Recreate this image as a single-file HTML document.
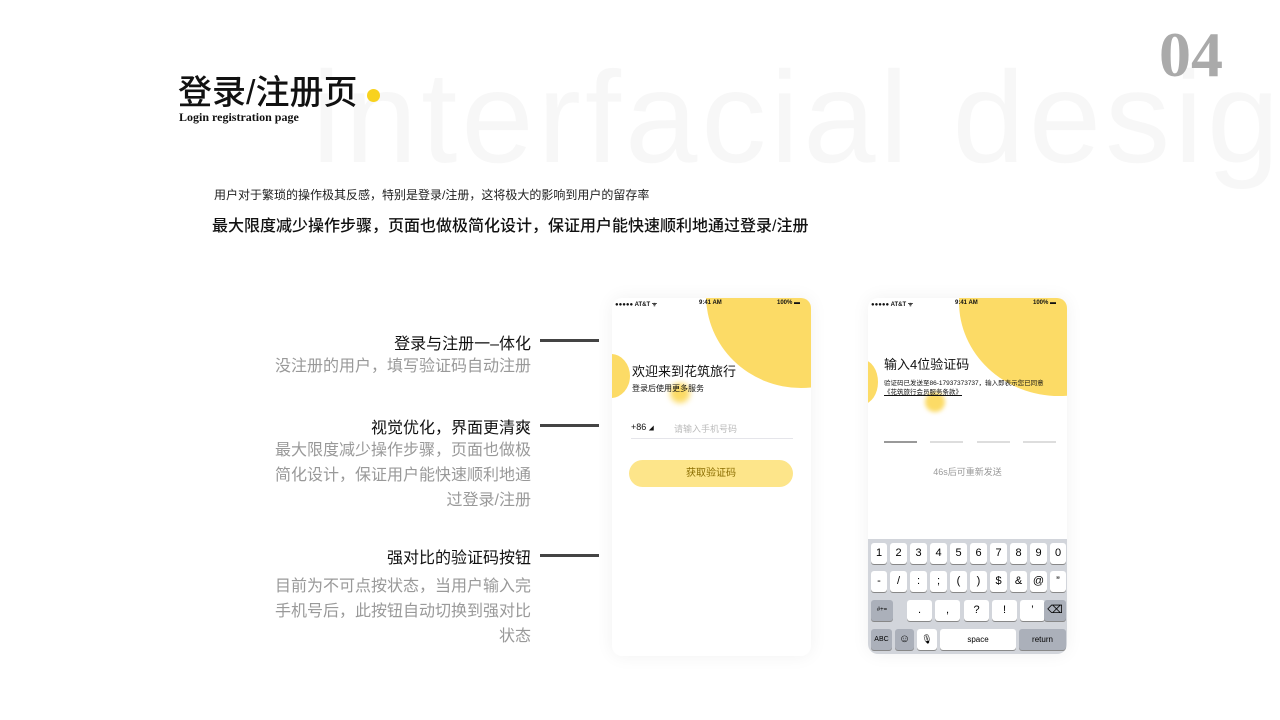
<!DOCTYPE html>
<html><head><meta charset="utf-8"><style>
*{margin:0;padding:0;box-sizing:border-box}
body{width:1280px;height:720px;background:#fff;position:relative;overflow:hidden;font-family:"Liberation Sans","Noto Sans CJK SC",sans-serif;color:#111}
.a{position:absolute}
.wm{left:312px;top:42px;font-size:130px;color:#f7f7f7;letter-spacing:4px;white-space:nowrap;font-family:"Liberation Sans",sans-serif}
.phone{position:absolute;background:#fff;border-radius:10px;overflow:hidden;box-shadow:0 0 18px rgba(0,0,0,.06)}
.sb{position:absolute;top:2px;font-size:6px;font-weight:bold;color:#111}
.circ{position:absolute;border-radius:50%;background:#fcdb66}
.kb{position:absolute;left:0;bottom:0;width:100%;height:115px;background:#d2d5db}
.k{position:absolute;background:#fff;border-radius:3px;box-shadow:0 1px 0 #888;font-size:11px;text-align:center;line-height:21px;color:#000}
.g{background:#abb0ba}
.lbl{position:absolute;right:749px;text-align:right;white-space:nowrap;font-size:16px}
.line{position:absolute;left:540px;width:59px;height:3px;background:#444}
</style></head><body>
<div class="a wm">interfacial desig</div>
<div class="a" style="left:1159px;top:18px;font-family:'Liberation Serif',serif;font-weight:bold;font-size:64px;color:#aaa">04</div>
<div class="a" style="left:178px;top:65px;font-size:34px;color:#111;font-weight:500">登录/注册页</div>
<div class="a" style="left:367px;top:89px;width:13px;height:13px;border-radius:50%;background:#f8d21e"></div>
<div class="a" style="left:179px;top:110px;font-family:'Liberation Serif',serif;font-weight:bold;font-size:12px">Login registration page</div>
<div class="a" style="left:214px;top:186px;font-size:12px;color:#222">用户对于繁琐的操作极其反感，特别是登录/注册，这将极大的影响到用户的留存率</div>
<div class="a" style="left:212px;top:212px;font-size:16px;color:#111;font-weight:500">最大限度减少操作步骤，页面也做极简化设计，保证用户能快速顺利地通过登录/注册</div>

<div class="lbl" style="top:330px">登录与注册一–体化</div>
<div class="lbl" style="top:352px;color:#999">没注册的用户，填写验证码自动注册</div>
<div class="line" style="top:339px"></div>
<div class="lbl" style="top:414px">视觉优化，界面更清爽</div>
<div class="lbl" style="top:438px;color:#999;line-height:25px">最大限度减少操作步骤，页面也做极<br>简化设计，保证用户能快速顺利地通<br>过登录/注册</div>
<div class="line" style="top:424px"></div>
<div class="lbl" style="top:544px">强对比的验证码按钮</div>
<div class="lbl" style="top:574px;color:#999;line-height:25px">目前为不可点按状态，当用户输入完<br>手机号后，此按钮自动切换到强对比<br>状态</div>
<div class="line" style="top:554px"></div>

<div class="phone" style="left:612px;top:298px;width:199px;height:358px">
<div class="circ" style="left:94px;top:-95px;width:190px;height:185px"></div>
<div class="circ" style="left:-20px;top:56px;width:38px;height:44px"></div>
<div class="circ" style="left:58px;top:85px;width:20px;height:20px;filter:blur(3px)"></div>
<div class="sb" style="left:3px">●●●●● AT&amp;T ᯤ</div><div class="sb" style="left:87px">9:41 AM</div><div class="sb" style="left:165px">100% ▬</div>
<div class="a" style="left:20px;top:63px;font-size:13px">欢迎来到花筑旅行</div>
<div class="a" style="left:20px;top:85px;font-size:8px">登录后使用更多服务</div>
<div class="a" style="left:19px;top:124px;font-size:9px">+86 <span style="font-size:5px">◢</span></div>
<div class="a" style="left:62px;top:124px;font-size:9px;color:#bbb">请输入手机号码</div>
<div class="a" style="left:19px;top:140px;width:162px;height:1px;background:#e5e5ea"></div>
<div class="a" style="left:17px;top:162px;width:164px;height:27px;border-radius:14px;background:#fde58a;font-size:10px;text-align:center;line-height:27px;color:#8a6d00">获取验证码</div>
</div>

<div class="phone" style="left:868px;top:298px;width:199px;height:356px">
<div class="circ" style="left:91px;top:-90px;width:200px;height:188px"></div>
<div class="circ" style="left:-20px;top:62px;width:30px;height:44px"></div>
<div class="circ" style="left:57px;top:94px;width:20px;height:20px;filter:blur(2px)"></div>
<div class="sb" style="left:3px">●●●●● AT&amp;T ᯤ</div><div class="sb" style="left:87px">9:41 AM</div><div class="sb" style="left:165px">100% ▬</div>
<div class="a" style="left:16px;top:56px;font-size:13px">输入4位验证码</div>
<div class="a" style="left:16px;top:79px;font-size:6.5px;white-space:nowrap">验证码已发送至86-17937373737，输入即表示您已同意</div>
<div class="a" style="left:16px;top:88px;font-size:6.5px;text-decoration:underline">《花筑旅行会员服务条款》</div>
<div class="a" style="left:16px;top:143px;width:33px;height:2px;background:#999"></div>
<div class="a" style="left:62px;top:143px;width:33px;height:2px;background:#ddd"></div>
<div class="a" style="left:109px;top:143px;width:33px;height:2px;background:#ddd"></div>
<div class="a" style="left:155px;top:143px;width:33px;height:2px;background:#ddd"></div>
<div class="a" style="left:0;top:167px;width:100%;text-align:center;font-size:9px;color:#999">46s后可重新发送</div>
<div class="kb">
<div class="k" style="left:3px;top:4px;width:16px">1</div><div class="k" style="left:22px;top:4px;width:17px">2</div><div class="k" style="left:42px;top:4px;width:17px">3</div><div class="k" style="left:62px;top:4px;width:17px">4</div><div class="k" style="left:82px;top:4px;width:17px">5</div><div class="k" style="left:102px;top:4px;width:17px">6</div><div class="k" style="left:122px;top:4px;width:17px">7</div><div class="k" style="left:142px;top:4px;width:17px">8</div><div class="k" style="left:162px;top:4px;width:17px">9</div><div class="k" style="left:182px;top:4px;width:16px">0</div>
<div class="k" style="left:3px;top:32px;width:16px">-</div><div class="k" style="left:22px;top:32px;width:17px">/</div><div class="k" style="left:42px;top:32px;width:17px">:</div><div class="k" style="left:62px;top:32px;width:17px">;</div><div class="k" style="left:82px;top:32px;width:17px">(</div><div class="k" style="left:102px;top:32px;width:17px">)</div><div class="k" style="left:122px;top:32px;width:17px">$</div><div class="k" style="left:142px;top:32px;width:17px">&amp;</div><div class="k" style="left:162px;top:32px;width:17px">@</div><div class="k" style="left:182px;top:32px;width:16px">”</div>
<div class="k g" style="left:3px;top:61px;width:22px;font-size:6px">#+=</div>
<div class="k" style="left:39px;top:61px;width:25px">.</div><div class="k" style="left:67px;top:61px;width:25px">,</div><div class="k" style="left:96px;top:61px;width:25px">?</div><div class="k" style="left:124px;top:61px;width:25px">!</div><div class="k" style="left:152px;top:61px;width:25px">’</div>
<div class="k g" style="left:176px;top:61px;width:22px">⌫</div>
<div class="k g" style="left:3px;top:90px;width:21px;font-size:7px">ABC</div><div class="k g" style="left:27px;top:90px;width:19px">☺</div><div class="k" style="left:49px;top:90px;width:20px;font-size:9px">🎙</div>
<div class="k" style="left:72px;top:90px;width:76px;font-size:8px">space</div>
<div class="k g" style="left:151px;top:90px;width:47px;font-size:8px">return</div>
</div>
</div>
</body></html>
